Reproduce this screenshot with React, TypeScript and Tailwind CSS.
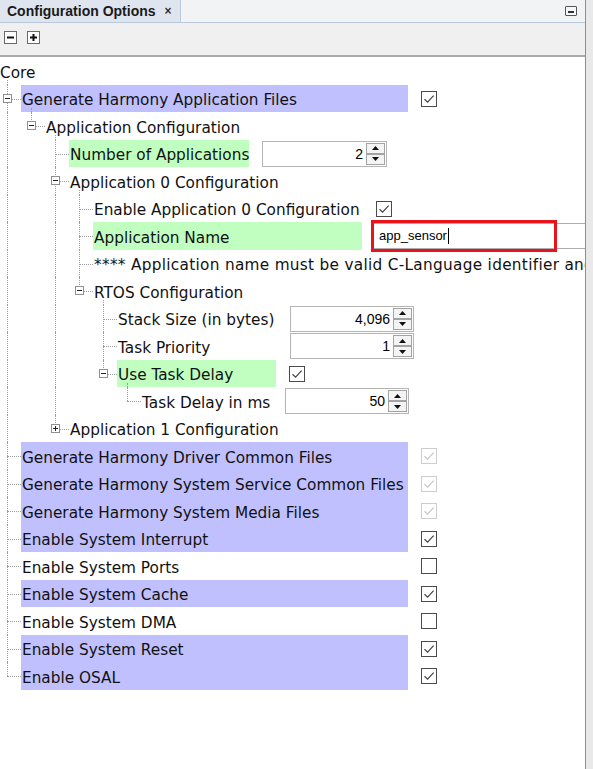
import React from "react";

type Widget =
  | { kind: "check"; on: boolean; dim?: boolean }
  | { kind: "spin"; value: string; w: string }
  | { kind: "text"; value: string };

type Row = {
  label: string;
  level: number;
  pipes?: number[];
  last?: boolean;
  exp?: "minus" | "plus";
  hl?: "purple" | "green";
  w?: string;
  extra?: string;
  widget?: Widget;
};

const rows: Row[] = [
  { label: "Core", level: -1, exp: "minus", extra: "-ml-px" },
  { label: "Generate Harmony Application Files", level: 0, exp: "minus", hl: "purple", w: "w-[387px]", widget: { kind: "check", on: true } },
  { label: "Application Configuration", level: 1, pipes: [0], last: true, exp: "minus" },
  { label: "Number of Applications", level: 2, pipes: [0], hl: "green", w: "w-[180px]", widget: { kind: "spin", value: "2", w: "w-[125px]" } },
  { label: "Application 0 Configuration", level: 2, pipes: [0], exp: "minus" },
  { label: "Enable Application 0 Configuration", level: 3, pipes: [0, 2], w: "w-[270px]", widget: { kind: "check", on: true } },
  { label: "Application Name", level: 3, pipes: [0, 2], hl: "green", w: "w-[269px]", widget: { kind: "text", value: "app_sensor" } },
  { label: "**** Application name must be valid C-Language identifier and", level: 3, pipes: [0, 2], extra: "tracking-[0.3px]" },
  { label: "RTOS Configuration", level: 3, pipes: [0, 2], last: true, exp: "minus" },
  { label: "Stack Size (in bytes)", level: 4, pipes: [0, 2], w: "w-[160px]", widget: { kind: "spin", value: "4,096", w: "w-[124px]" } },
  { label: "Task Priority", level: 4, pipes: [0, 2], w: "w-[160px]", widget: { kind: "spin", value: "1", w: "w-[124px]" } },
  { label: "Use Task Delay", level: 4, pipes: [0, 2], last: true, exp: "minus", hl: "green", w: "w-[159px]", widget: { kind: "check", on: true } },
  { label: "Task Delay in ms", level: 5, pipes: [0, 2], last: true, w: "w-[131px]", widget: { kind: "spin", value: "50", w: "w-[124px]" } },
  { label: "Application 1 Configuration", level: 2, pipes: [0], last: true, exp: "plus" },
  { label: "Generate Harmony Driver Common Files", level: 0, hl: "purple", w: "w-[387px]", widget: { kind: "check", on: true, dim: true } },
  { label: "Generate Harmony System Service Common Files", level: 0, hl: "purple", w: "w-[387px]", widget: { kind: "check", on: true, dim: true } },
  { label: "Generate Harmony System Media Files", level: 0, hl: "purple", w: "w-[387px]", widget: { kind: "check", on: true, dim: true } },
  { label: "Enable System Interrupt", level: 0, hl: "purple", w: "w-[387px]", widget: { kind: "check", on: true } },
  { label: "Enable System Ports", level: 0, w: "w-[387px]", widget: { kind: "check", on: false } },
  { label: "Enable System Cache", level: 0, hl: "purple", w: "w-[387px]", widget: { kind: "check", on: true } },
  { label: "Enable System DMA", level: 0, w: "w-[387px]", widget: { kind: "check", on: false } },
  { label: "Enable System Reset", level: 0, hl: "purple", w: "w-[387px]", widget: { kind: "check", on: true } },
  { label: "Enable OSAL", level: 0, last: true, hl: "purple", w: "w-[387px]", widget: { kind: "check", on: true } },
];

// x of the line that leads down to the children of an expanded node
const childLine = ["left-[7px]", "left-[31px]", "left-[55px]", "left-[79px]", "left-[103px]", "left-[127px]"];

const Expander = ({ plus }: { plus?: boolean }) => (
  <div className="absolute left-[3px] top-1/2 -mt-[5px] w-[9px] h-[9px] border border-[#8f8f8f] bg-white flex items-center justify-center">
    <svg width="7" height="7" viewBox="0 0 7 7">
      <path d="M1 3.5H6" stroke="#222" strokeWidth="1" />
      {plus && <path d="M3.5 1V6" stroke="#222" strokeWidth="1" />}
    </svg>
  </div>
);

const Check = ({ on, dim }: { on: boolean; dim?: boolean }) => (
  <div
    className={`ml-[13px] w-4 h-4 shrink-0 bg-white border flex items-center justify-center ${
      dim ? "border-[#cdcdcd]" : "border-[#4a4a4a]"
    }`}
  >
    {on && (
      <svg width="12" height="12" viewBox="0 0 12 12">
        <path d="M1.5 6.2L4.6 9.2L10.6 2.6" fill="none" stroke={dim ? "#c6c6c6" : "#444"} strokeWidth="1.2" />
      </svg>
    )}
  </div>
);

const SpinBtn = ({ up }: { up?: boolean }) => (
  <div className="flex-1 border border-[#a3a3a3] bg-[#f4f4f4] flex items-center justify-center">
    <svg width="7" height="4" viewBox="0 0 7 4">
      <path d={up ? "M0 4L3.5 0L7 4Z" : "M0 0L3.5 4L7 0Z"} fill="#111" />
    </svg>
  </div>
);

const Spinner = ({ value, w }: { value: string; w: string }) => (
  <div className={`ml-[13px] ${w} h-[26px] shrink-0 border border-[#b4b4b4] bg-white flex`}>
    <span className="flex-1 flex items-center justify-end pr-[3px] pt-px font-['Liberation_Sans',sans-serif] text-[14px] text-black">
      {value}
    </span>
    <div className="w-[20px] flex flex-col py-[1px] pr-[1px]">
      <SpinBtn up />
      <SpinBtn />
    </div>
  </div>
);

const TextField = ({ value }: { value: string }) => (
  <div className="relative ml-[11px] w-[240px] h-[26px] shrink-0 border border-[#adadad] bg-white flex items-center pl-[5px] font-['Liberation_Sans',sans-serif] text-[13px] text-black">
    {value}
    <span className="ml-px w-px h-[16px] bg-black" />
    <div className="absolute -left-[3px] -top-[4px] w-[186px] h-[32px] border-[3px] border-[#e8141c]" />
  </div>
);

const TreeRow = ({ r, i }: { r: Row; i: number }) => {
  const h = i % 2 === 0 ? "h-[28px]" : "h-[27px]";
  const bg = r.hl === "purple" ? "bg-[#c0c0ff]" : r.hl === "green" ? "bg-[#c0ffc0]" : "";
  const cells: React.ReactNode[] = [];
  for (let k = 0; k < r.level; k++) {
    cells.push(
      <div key={k} className="relative w-6 shrink-0">
        {r.pipes?.includes(k) && (
          <div className="absolute left-[7px] top-0 bottom-0 border-l border-dotted border-[#9c9c9c]" />
        )}
      </div>
    );
  }
  return (
    <div className={`relative flex items-stretch whitespace-nowrap ${h}`}>
      {cells}
      {r.level >= 0 && (
        <div className="relative w-[21px] shrink-0">
          <div
            className={`absolute left-[7px] top-0 border-l border-dotted border-[#9c9c9c] ${
              r.last ? "h-1/2" : "bottom-0"
            }`}
          />
          <div className="absolute left-[7px] right-0 top-1/2 border-t border-dotted border-[#9c9c9c]" />
          {r.exp && <Expander plus={r.exp === "plus"} />}
        </div>
      )}
      {r.exp === "minus" && (
        <div
          className={`absolute ${childLine[r.level + 1]} top-[calc(50%+9px)] bottom-0 border-l border-dotted border-[#9c9c9c]`}
        />
      )}
      <div className={`flex items-center pl-px pt-[4px] shrink-0 ${r.w ?? ""} ${bg} ${r.extra ?? ""}`}>{r.label}</div>
      {r.widget && (
        <div className="flex items-center">
          {r.widget.kind === "check" && <Check on={r.widget.on} dim={r.widget.dim} />}
          {r.widget.kind === "spin" && <Spinner value={r.widget.value} w={r.widget.w} />}
          {r.widget.kind === "text" && <TextField value={r.widget.value} />}
        </div>
      )}
    </div>
  );
};

const ToolBtn = ({ plus }: { plus?: boolean }) => (
  <div className="w-[13px] h-[13px] border border-[#6a6a6a] bg-white flex items-center justify-center">
    <svg width="9" height="9" viewBox="0 0 9 9">
      <path d="M1 4.5H8" stroke="#111" strokeWidth="2" />
      {plus && <path d="M4.5 1V8" stroke="#111" strokeWidth="2" />}
    </svg>
  </div>
);

export default function App() {
  return (
    <div className="w-[593px] h-[769px] flex overflow-hidden bg-[#e9e9e9] font-['DejaVu_Sans',sans-serif]">
      <div className="w-[586px] h-full flex flex-col border-r border-[#8e8e8e] overflow-hidden">
        <header className="h-[23px] shrink-0 flex items-stretch bg-[#f2f3f5] border-b border-[#b9c8dc]">
          <div className="flex items-center gap-[9px] pl-[7px] pr-[8px] bg-[#dfe5ef] border-r border-[#b9c8dc]">
            <span className="font-['Liberation_Sans',sans-serif] font-bold text-[14px] text-[#1a1a1a]">
              Configuration Options
            </span>
            <span className="font-['Liberation_Sans',sans-serif] font-bold text-[12px] text-[#333]">×</span>
          </div>
          <div className="flex-1" />
          <div className="self-center mr-[8px] w-[12px] h-[10px] border border-[#555] rounded-[1px] flex items-end justify-center pb-[2px] bg-[#f7f7f7]">
            <div className="w-[6px] h-[2px] bg-[#333]" />
          </div>
        </header>
        <div className="h-[34px] shrink-0 bg-[#f0f0f0] border-b-2 border-[#aaaaaa] flex items-start gap-[10px] pl-[4px] pt-[8px]">
          <ToolBtn />
          <ToolBtn plus />
        </div>
        <main className="flex-1 bg-white overflow-hidden text-[15.3px] text-[#111]">
          {rows.map((r, i) => (
            <TreeRow key={i} r={r} i={i} />
          ))}
        </main>
      </div>
      <div className="w-[7px] h-full bg-[#e9e9e9]" />
    </div>
  );
}
